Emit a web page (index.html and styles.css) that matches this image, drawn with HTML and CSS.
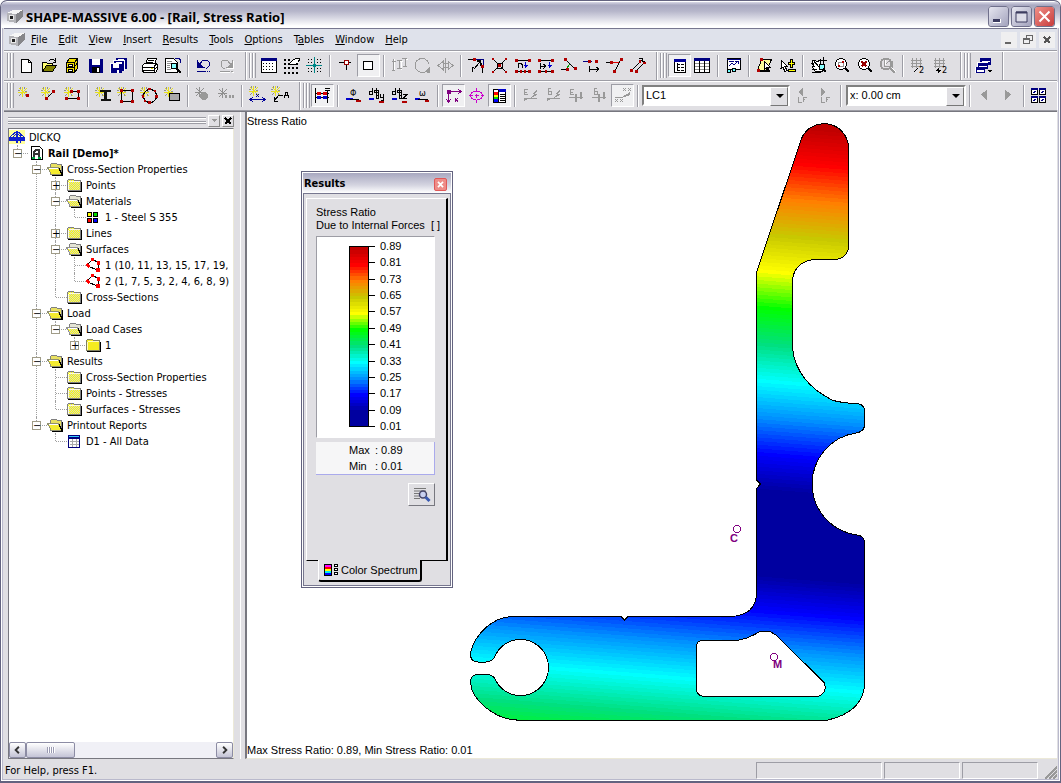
FILE: index.html
```html
<!DOCTYPE html>
<html lang="en">
<head>
<meta charset="utf-8">
<title>SHAPE-MASSIVE 6.00 - [Rail, Stress Ratio]</title>
<link rel="stylesheet" href="styles.css">
</head>
<body>
<svg class="defs" aria-hidden="true">
  <pattern id="hatch" width="2" height="2" patternUnits="userSpaceOnUse"><path d="M0 0h2v2H0z" fill="#d4d4c8"/><path d="M0 0h1v1H0zM1 1h1v1H1z" fill="#ffff00"/></pattern>
  <symbol id="spark" viewBox="0 0 10 10"><path class="ye" d="M4.500 0v10M0 5.500h9M1 1l8 8M9 1l-8 8"/><path class="gr" d="M2 0l1 2M7 0l-1 2M0 3h2M7 4h2M1 9l2-2M7 7l1 2"/></symbol>
  <symbol id="sparkg" viewBox="0 0 10 10"><path class="gr" d="M4.500 0v10M0 5.500h9M1 1l8 8M9 1l-8 8"/></symbol>
  <symbol id="closed" viewBox="0 0 18 16"><path d="M1.500 13.500v-10l1.500-1.500h4l1.500 1.500h6v10z" fill="url(#hatch)" stroke="#808080"/><path d="M2 14.500h13.500v-10" fill="none" stroke="#000"/><path d="M3 4.500h11M2.500 5v8" stroke="#fffbe0"/></symbol>
  <symbol id="closedy" viewBox="0 0 18 16"><path d="M1.500 13.500v-10l1.500-1.500h4l1.500 1.500h6v10z" fill="#f4ec20" stroke="#808060"/><path d="M2 14.500h13.500v-10" fill="none" stroke="#000"/><path d="M3 4.500h11M2.500 5v8" stroke="#fffbc0"/></symbol>
  <symbol id="open" viewBox="0 0 18 16"><path d="M3.500 13.500v-10l1.500-1.500h4l1.500 1.500h4v10z" fill="#e8e060" stroke="#808080"/><path d="M.5 6.500h11l3 7h-10z" fill="#f4ec30" stroke="#909070"/><path d="M5 14.500h10.500v-10" fill="none" stroke="#000"/><path d="M15 13.500l-3-6" stroke="#000"/><path d="M2 7.500h9" stroke="#fff"/></symbol>
  <symbol id="openg" viewBox="0 0 18 16"><path d="M3.500 13.500v-10l1.500-1.500h4l1.500 1.500h4v10z" fill="#e4e4d4" stroke="#808080"/><path d="M.5 6.500h11l3 7h-10z" fill="url(#hatch)" stroke="#909090"/><path d="M5 14.500h10.500v-10" fill="none" stroke="#000"/><path d="M15 13.500l-3-6" stroke="#000"/><path d="M2 7.500h9" stroke="#fff"/></symbol>
  <symbol id="poly" viewBox="0 0 18 16"><path d="M1.500 8.500l6-6 6 3v8z" fill="#fff" stroke="#000"/><path d="M0 8l3-2 2 3-2 2zM6 1h3v3H6zM12 4h3v4h-3zM11 11h4v4h-4z" fill="#f00"/></symbol>
  <symbol id="app" viewBox="0 0 16 16"><path d="M0 4l6-3h10l-7 4z" fill="#f6f6f6"/><path d="M9 5l7-4v7l-7 6z" fill="#86868a"/><path d="M0 4l9 1v9l-9-2z" fill="#b4b4b8"/><path d="M2 6h5v5H2z" fill="#e8e8e8"/><path d="M3 7h3v3H3z" fill="#222"/></symbol>
</svg>
<div class="window">
  <header class="titlebar">
    <svg class="i16"><use href="#app"/></svg>
    <h1>SHAPE-MASSIVE 6.00 - [Rail, Stress Ratio]</h1>
    <div class="winbtns">
      <button aria-label="Minimize"><svg viewBox="0 0 19 19"><path d="M4 12h8v4H4z" fill="#fff"/><path d="M4 12h7v3H4z" fill="#3c3c60"/></svg></button>
      <button aria-label="Maximize"><svg viewBox="0 0 19 19"><path d="M4 5h11v10H4z" fill="#dcdce8" stroke="#3c3c60"/><path d="M4 5.500h11" stroke="#3c3c60" stroke-width="2"/></svg></button>
      <button class="red" aria-label="Close"><svg viewBox="0 0 19 19"><path d="M4.500 4.500l10 10M14.500 4.500l-10 10" stroke="#fff" stroke-width="2"/></svg></button>
    </div>
  </header>
  <nav class="menubar">
    <svg class="i16"><use href="#app"/></svg>
    <button><u>F</u>ile</button><button><u>E</u>dit</button><button><u>V</u>iew</button><button><u>I</u>nsert</button><button><u>R</u>esults</button><button><u>T</u>ools</button><button><u>O</u>ptions</button><button>T<u>a</u>bles</button><button><u>W</u>indow</button><button><u>H</u>elp</button>
    <div class="mdibtns">
      <button aria-label="Minimize document"><svg viewBox="0 0 16 16"><path d="M4 10h6v2H4z" fill="#666"/></svg></button>
      <button aria-label="Restore document"><svg viewBox="0 0 16 16"><path d="M3.500 6.500h6v5h-6zM6 6V3.500h6.500v5H10M4 7.500h5" fill="none" stroke="#666"/></svg></button>
      <button aria-label="Close document"><svg viewBox="0 0 16 16"><path d="M5 5l6 6M11 5l-6 6" stroke="#555" stroke-width="2"/></svg></button>
    </div>
  </nav>

  <div class="toolrow">
    <div class="band">
      <i class="grip"></i>
      <button aria-label="New"><svg viewBox="0 0 21 21"><path d="M5.500 4.500h7l3 3v10h-10z" fill="#fff" stroke="#000"/><path class="k" d="M12.500 4.500v3h3"/></svg></button>
      <button aria-label="Open"><svg viewBox="0 0 21 21"><path d="M3.500 16.500v-9h4l1 1h5v3" fill="#ffff70" stroke="#000"/><path d="M3.500 16.500l4-6h10l-4 6z" fill="#808000" stroke="#000"/><path class="k" d="M10 6l2-2h2l2 2M16.500 3v4h-3"/></svg></button>
      <button aria-label="Project manager"><svg viewBox="0 0 21 21"><path d="M4.500 7.500l3-4h8v10l-3 4h-8z" fill="#f0e000" stroke="#000"/><path class="k" d="M4.500 7.500h8v10M12.500 7.500l3-4M4 12.500h8l3-4"/><path d="M6 9h4v2H6zM6 14h4v2H6z" fill="#fff" stroke="#000"/></svg></button>
      <button aria-label="Save"><svg viewBox="0 0 21 21"><path d="M4 4h14v14H5l-1-1z" fill="#000080"/><path d="M7 4h8v6H7z" fill="#fff"/><path d="M7 12h8v6H7z" fill="#000"/><path d="M12 13h2v4h-2z" fill="#fff"/></svg></button>
      <button aria-label="Save all"><svg viewBox="0 0 21 21"><path d="M8 3h11v11H8z" fill="#000080"/><path d="M10 4h6v2h-6z" fill="#fff"/><path d="M5 5h12v11H5z" fill="#fff"/><path d="M6 6h10v10H6z" fill="#000080"/><path d="M8 7h6v1H8z" fill="#fff"/><path d="M2 8h12v10H2z" fill="#fff"/><path d="M3 9h11v9H3z" fill="#000080"/><path d="M5 9h6v4H5zM9 15h2v3H9z" fill="#fff"/></svg></button>
      <i class="sep"></i>
      <button aria-label="Print"><svg viewBox="0 0 21 21"><path d="M6.500 9.500l2-6h9l-2 6M3.500 10.500l2-2h12l1 1v5l-2 3h-11l-2-1z" fill="#fff" stroke="#000"/><path class="k" d="M9 5.500h6M8 7.500h6M4 12.500h11M15 17v-6l3-2M4 15.500h11M16 14l3-3"/><path d="M12 13h2v1h-2z" fill="#dd0"/></svg></button>
      <button aria-label="Print preview"><svg viewBox="0 0 21 21"><path d="M3.500 3.500h8l4 4v10h-12z" fill="#fff" stroke="#000"/><path class="gr" d="M5 6.500h5M5 8.500h4M5 10.500h3M5 12.500h3M5 14.500h4"/><circle cx="12" cy="11" r="3" fill="#8ff" stroke="#000"/><path d="M14 13l5 5" stroke="#000" stroke-width="2"/><path class="n" d="M13 3.500h4l1 1v3"/></svg></button>
      <i class="sep"></i>
      <button aria-label="Undo"><svg viewBox="0 0 21 21"><path class="n" d="M4.500 5v7h7M5 11l5-6h4l2 2v4l-2 2h-1M4 16.500h9M14 16.500h1M16 16.500h1"/><path d="M5 7l5 5H5z" fill="#000080"/></svg></button>
      <button aria-label="Redo" disabled><svg viewBox="0 0 21 21"><path class="w" d="M17.500 6v7h-7M4 17.500h10M16 17.500h2"/><path class="g" d="M16.500 5v7h-7M16 11l-5-6H7L5 7v4l2 2h2M4 16.500h10M15 16.500h2"/><path d="M16 7l-5 5h5z" fill="#999"/></svg></button>
    </div>
    <div class="band">
      <i class="grip"></i>
      <button aria-label="Work window"><svg viewBox="0 0 21 21"><path d="M3.500 3.500h15v14h-15z" fill="#fff" stroke="#000"/><path d="M3 3h16v3H3z" fill="#000080"/><path class="dot" d="M5 8.500h12M5 11.500h12M5 14.500h12"/></svg></button>
      <button aria-label="Snap"><svg viewBox="0 0 21 21"><path class="dots" d="M3 4.500h6M3 8.500h15M3 12.500h15M3 17.500h15"/><path d="M8.500 8.500l3-3 3-2h4l-1 4-3 2h-5z" fill="#fff" stroke="#000"/></svg></button>
      <button aria-label="Grid"><svg viewBox="0 0 21 21"><path class="dot" d="M4 4.500h14M4 7.500h14M4 13.500h14M4 16.500h14"/><path d="M10.500 2v16M2 10.500h16M9.500 9.500h2v2h-2z" fill="none" stroke="#088"/></svg></button>
      <i class="sep"></i>
      <button aria-label="Node mode"><svg viewBox="0 0 21 21"><path class="k" d="M4 7.500h12M11.500 7v8"/><path d="M9.500 5.500h4v4h-4z" fill="#fff" stroke="#900"/></svg></button>
      <button class="on" aria-label="Rectangle mode"><svg viewBox="0 0 21 21"><path d="M5.500 6.500h9v8h-9z" fill="#fff" stroke="#000"/></svg></button>
      <i class="sep"></i>
      <button aria-label="Move" disabled><svg viewBox="0 0 21 21"><path class="w" d="M5.500 4v12M10 6h4M12 6v9M16 4h3"/><path class="g" d="M4.500 4v12M3 6.500h4M3 15.500h3M8 5.500h5M10.500 5v9M8 13.500h5M13 3.500h5M16.500 3v9M14 11.500h4"/></svg></button>
      <button aria-label="Rotate" disabled><svg viewBox="0 0 21 21"><path class="g" d="M15 15.500A7 7 0 1 1 17 9"/><path d="M12 17l6-6v7z" fill="#999"/></svg></button>
      <button aria-label="Mirror" disabled><svg viewBox="0 0 21 21"><path class="g" d="M3 10.500l5-4v8zM18 10.500l-5-4v8zM10.500 3v15M8 8.500h5M8 12.500h5"/></svg></button>
      <i class="sep"></i>
      <button aria-label="Fillet"><svg viewBox="0 0 21 21"><path class="k" d="M2 4.500h6l6 1 2 6v6M8 14l6-7M14.500 11V6h-4M6 17v-5h2"/><path class="n" d="M9 4.500h8v6"/><path class="r" d="M7 3h3v3H7zM15 10h3v3h-3z"/></svg></button>
      <button aria-label="Intersect"><svg viewBox="0 0 21 21"><path class="k" d="M4 4l13 13M17 4L4 17M8 8h5v5H8z"/><path class="r" d="M3 3h2v2H3zM16 3h2v2h-2zM3 16h2v2H3zM16 16h2v2h-2zM9 9h3v3H9z"/></svg></button>
      <button aria-label="Divide by number"><svg viewBox="0 0 21 21"><path class="k" d="M4 5.500h13M4 16.500h13M6.500 8v5M7 8.500h2l1 1V13"/><path d="M13.500 7v6M11.500 10.500h4M12.500 11.500h2" stroke="#00c"/><path class="r" d="M3 4h3v3H3zM16 4h3v3h-3zM3 15h3v3H3zM8 15h2v3H8zM12 15h2v3h-2zM16 15h3v3h-3z"/></svg></button>
      <button aria-label="Divide by length"><svg viewBox="0 0 21 21"><path class="k" d="M4 5.500h13M4 16.500h13M5.500 8v6M6 11.500h5M8.500 9l2 2-2 3"/><path d="M14.500 7v6M12.500 10.500h4M13.500 11.500h2" stroke="#00c"/><path class="r" d="M3 4h3v3H3zM16 4h3v3h-3zM3 15h3v3H3zM10 15h2v3h-2zM16 15h3v3h-3z"/></svg></button>
      <button aria-label="Connect"><svg viewBox="0 0 21 21"><path class="k" d="M7 4l10 10M3 14.500h6"/><path d="M8 14l4-5" stroke="#090"/><path class="r" d="M6 3h3v3H6zM16 12h3v3h-3zM8 13h3v3H8z"/></svg></button>
      <button aria-label="Extend"><svg viewBox="0 0 21 21"><path class="n" d="M2 6.500h9"/><path class="k" d="M8.500 11v6M9 14.500h9M15 12l3 2-3 3"/><path class="r" d="M7 5h3v3H7zM14 5h3v3h-3z"/></svg></button>
      <button aria-label="Trim"><svg viewBox="0 0 21 21"><path class="k" d="M2 7.500h7M17 4l-6 12"/><path d="M9 7.500h6" stroke="#d00"/><path class="r" d="M6 6h3v3H6zM16 3h3v3h-3zM9 15h3v3H9z"/></svg></button>
      <button aria-label="Parallel"><svg viewBox="0 0 21 21"><path class="k" d="M4 16l9-9M9 16l9-9M12 3h3v4M13 5l5 2"/><path class="r" d="M3 14h3v3H3zM8 15h3v3H8zM12 5h2v3h-2zM16 7h3v2h-3z"/></svg></button>
    </div>
    <div class="band">
      <i class="grip"></i>
      <button class="on" aria-label="Navigator"><svg viewBox="0 0 21 21"><path d="M5.500 4.500h11v13h-11z" fill="#fff" stroke="#000"/><path d="M5 4h12v3H5z" fill="#009"/><path class="k" d="M8.500 8v8M8 9.500h3M9 12.500h2M9 15.500h2M12 9.500h3M12 12.500h3M12 15.500h3"/></svg></button>
      <button aria-label="Tables"><svg viewBox="0 0 21 21"><path d="M2.500 3.500h15v14h-15z" fill="#fff" stroke="#000"/><path d="M2 3h16v3H2z" fill="#000080"/><path class="gr" d="M3 8.500h14M3 11.500h14M3 14.500h14"/><path class="k" d="M7.500 6v11M12.500 6v11"/></svg></button>
      <i class="sep"></i>
      <button aria-label="Result diagrams"><svg viewBox="0 0 21 21"><path d="M4.500 3.500h13v11h-13z" fill="#fff" stroke="#000"/><path class="n" d="M4 4h14M6 11l3-3 2 2 4-4M12 6h3v3M6 6h5"/><path d="M4 14h3v3H4zM9 13h3v3H9z" fill="#6ff" stroke="#000"/></svg></button>
      <i class="sep"></i>
      <button aria-label="Select special"><svg viewBox="0 0 21 21"><path d="M7.500 4.500h10l-5 11h-9z" fill="#ff9" stroke="#000"/><path class="k" d="M3 16.500h13"/><path d="M10.500 6.500v8l2-2 2 4 1-1-2-3h3z" fill="#fff" stroke="#000"/><path class="r" d="M6 3h3v3H6zM3 14h3v3H3z"/></svg></button>
      <button aria-label="Add to selection"><svg viewBox="0 0 21 21"><path d="M4.500 5.500l6 6H8l2 4-2 1-2-4-2 1z" fill="#fff" stroke="#000"/><path d="M11.500 7.500h2v-3h2v3h2v2h-2v3h-2v-3h-2zM11.500 14.500h7v2h-7z" fill="#ff0" stroke="#000"/></svg></button>
      <i class="sep"></i>
      <button aria-label="Pan"><svg viewBox="0 0 21 21"><path d="M4 6l3-1 2 2 3-2v4l2 2v5H7l-3-4 2-1z" fill="#fff" stroke="#000"/><path class="k" d="M3 8l4 4M5 5l6 7M4 14h5M15.500 2v8M12 5.500h7M4 17h9"/><circle cx="14" cy="12" r="3" fill="#8ff" stroke="#000"/><path d="M15 14l3 3" stroke="#000" stroke-width="2"/></svg></button>
      <button aria-label="Zoom window"><svg viewBox="0 0 21 21"><circle cx="10" cy="9" r="5.500" fill="#fff" stroke="#000"/><path d="M14 13l4 4" stroke="#000" stroke-width="2"/><path class="gr" d="M7.500 7.500h5v4h-5z"/><path class="r" d="M11 6h2v2h-2zM7 10h2v2H7z"/></svg></button>
      <button aria-label="Zoom all"><svg viewBox="0 0 21 21"><circle cx="10" cy="9" r="5.500" fill="#fff" stroke="#000"/><path d="M14 13l4 4" stroke="#000" stroke-width="2"/><path d="M7.500 6.500l5 5M12.500 6.500l-5 5" stroke="#900" stroke-width="2"/></svg></button>
      <button aria-label="Previous view" disabled><svg viewBox="0 0 21 21"><circle cx="9" cy="9" r="5.500" fill="none" stroke="#999" stroke-width="2"/><path d="M13 13l5 5" stroke="#999" stroke-width="2"/><path class="g" d="M7.500 5v6h6M8 10l4-4h3v7"/><path class="w" d="M8.500 5v5M15 13l4 4"/></svg></button>
      <i class="sep"></i>
      <button aria-label="Halve grid"><svg viewBox="0 0 21 21"><path class="g" d="M4.500 3v10M8.500 3v10M12.500 3v10M3 5.500h11M3 8.500h11M3 11.500h11"/><path class="k" d="M6 17l4-4"/><text class="tiny" x="11" y="18">2</text></svg></button>
      <button aria-label="Double grid"><svg viewBox="0 0 21 21"><path class="g" d="M4.500 3v10M8.500 3v10M12.500 3v10M3 5.500h11M3 8.500h11M3 11.500h11"/><path class="k" d="M5 15.500h5M7.500 13v5M6 14l3 3"/><text class="tiny" x="11" y="18">2</text></svg></button>
    </div>
    <div class="band">
      <i class="grip"></i>
      <button aria-label="Windows"><svg viewBox="0 0 21 21"><path d="M7 3h11v7H7z" fill="#000080"/><path d="M9 6h8v1H9z" fill="#fff"/><path d="M4 7h11v6H4z" fill="#fff"/><path d="M5 8h10v6H5z" fill="#000080"/><path d="M6 11h8v1H6z" fill="#fff"/><path d="M2 12h10v6H2z" fill="#fff"/><path d="M3 12h9v6H3z" fill="#000080"/><path d="M4 15h7v2H4z" fill="#fff"/><path d="M14 15h5l-2 3z"/></svg></button>
    </div>
  </div>

  <div class="toolrow second">
    <div class="band">
      <i class="grip"></i>
      <button aria-label="New point"><svg viewBox="0 0 21 21"><use href="#spark" width="10" height="10" x="2" y="2"/><path class="r" d="M10 9h3v3h-3z"/></svg></button>
      <button aria-label="New line"><svg viewBox="0 0 21 21"><use href="#spark" width="10" height="10" x="2" y="2"/><path class="k" d="M7 14l8-8"/><path class="r" d="M6 12h3v3H6zM13 5h3v3h-3z"/></svg></button>
      <button aria-label="New polyline"><svg viewBox="0 0 21 21"><use href="#spark" width="10" height="10" x="2" y="2"/><path class="k" d="M9 6.500h7v7H4"/><path class="r" d="M8 5h3v3H8zM15 5h3v3h-3zM15 12h3v3h-3zM3 12h3v3H3z"/></svg></button>
      <i class="sep"></i>
      <button aria-label="New section"><svg viewBox="0 0 21 21"><use href="#spark" width="10" height="10" x="2" y="2"/><path d="M7 5h11v2h-4v7h4v2H8v-2h3V7H7z" fill="#111"/></svg></button>
      <button aria-label="New rectangle"><svg viewBox="0 0 21 21"><use href="#spark" width="10" height="10" x="1" y="2"/><path class="k" d="M5.500 5.500h11v11h-11z"/><path class="r" d="M4 4h3v3H4zM15 4h3v3h-3zM4 15h3v3H4zM15 15h3v3h-3z"/></svg></button>
      <button aria-label="New circle"><svg viewBox="0 0 21 21"><use href="#spark" width="10" height="10" x="1" y="2"/><circle class="k" cx="11" cy="11" r="6.500"/><path class="r" d="M9 3h3v2H9zM3 10h2v3H3zM16 10h3v3h-3zM9 16h3v3H9zM15 5h2v2h-2zM5 15h2v2H5z"/></svg></button>
      <button aria-label="New surface"><svg viewBox="0 0 21 21"><use href="#spark" width="10" height="10" x="2" y="2"/><path d="M7.500 8.500h10v7h-10z" fill="#aaa" stroke="#000"/></svg></button>
      <i class="sep"></i>
      <button aria-label="New load" disabled><svg viewBox="0 0 21 21"><use href="#sparkg" width="10" height="10" x="2" y="2"/><circle cx="11" cy="11" r="4" fill="#999"/></svg></button>
      <button aria-label="New case" disabled><svg viewBox="0 0 21 21"><use href="#sparkg" width="10" height="10" x="2" y="3"/><path d="M9 10h2v3H9zM13 10h2v3h-2zM16 10h2v3h-2z" fill="#999"/></svg></button>
      <i class="sep"></i>
      <button aria-label="Dimension"><svg viewBox="0 0 21 21"><use href="#spark" width="10" height="10" x="2" y="1"/><path d="M4 14.500h13M6 12l-3 2.500L6 17M15 12l3 2.500-3 2.500M9 9l3 3M12 9l-3 3" fill="none" stroke="#009"/></svg></button>
      <button aria-label="Comment"><svg viewBox="0 0 21 21"><use href="#spark" width="10" height="10" x="1" y="1"/><path class="k" d="M4 16l5-6h4M4 12v4h4M14 13l2-6h1l2 6M15 10.500h3"/></svg></button>
    </div>
    <div class="band last">
      <i class="grip"></i>
      <button class="on" aria-label="Numbering"><svg viewBox="0 0 21 21"><path class="k" d="M3.500 3v15M15.500 6v12M13 3.500h5M13 5.500h5"/><path d="M3 8.500h14M3 12.500h14" stroke="#000"/><path d="M5 7h4v3H5zM11 7h4v3h-4z" fill="#d00"/><path d="M5 11h4v3H5zM11 11h4v3h-4z" fill="#00c"/></svg></button>
      <i class="sep"></i>
      <button aria-label="Phi"><svg viewBox="0 0 21 21"><text class="tiny" x="7" y="11">Φ</text><path d="M3 13.500h7" stroke="#00c" stroke-width="2"/><path class="k" d="M7 14.500h9"/><path class="r" d="M13 15h5v2h-5z"/></svg></button>
      <button aria-label="dPhi dy"><svg viewBox="0 0 21 21"><path class="k" d="M6.500 3v6h-3v-3h3M10.500 3v7M8.500 5.500h4v2h-4zM12.500 7v6h-2v-3h2M14.500 9v3h3M17.500 9v6h-3"/><path d="M3 13.500h5" stroke="#00c" stroke-width="2"/><path class="r" d="M13 16h5v2h-5z"/></svg></button>
      <button aria-label="dPhi dz"><svg viewBox="0 0 21 21"><path class="k" d="M6.500 3v6h-3v-3h3M10.500 3v7M8.500 5.500h4v2h-4zM12.500 7v6h-2v-3h2M14 9.500h4l-4 4h4"/><path d="M3 13.500h5" stroke="#00c" stroke-width="2"/><path class="r" d="M13 16h5v2h-5z"/></svg></button>
      <button aria-label="Omega"><svg viewBox="0 0 21 21"><text class="tiny" x="7" y="11">ω</text><path d="M3 13.500h5" stroke="#00c" stroke-width="2"/><path class="k" d="M6 14.500h10"/><path class="r" d="M13 15h4v2h-4z"/></svg></button>
      <i class="sep"></i>
      <button class="on" aria-label="Principal axes"><svg viewBox="0 0 21 21"><path class="p" d="M5.500 5v12M5 6.500h13M15 4l3 2.500-3 2.500M3 14l2.500 3L8 14M12 13l3 4M15 13l-3 4"/><path d="M4 5h4v4H4z" fill="#800080"/></svg></button>
      <button aria-label="Ellipse"><svg viewBox="0 0 21 21"><ellipse cx="10.500" cy="10.500" rx="6" ry="4.500" fill="none" stroke="#c0c"/><path d="M10.500 3v15M3 10.500h15" stroke="#c0c" stroke-dasharray="4 2"/></svg></button>
      <button class="on" aria-label="Color panel"><svg viewBox="0 0 21 21"><path d="M4.500 4.500h12v13h-12z" fill="#fff" stroke="#000"/><path d="M9 4h8v3H9z" fill="#00c"/><path d="M5 7h4v3H5z" fill="#f00"/><path d="M5 10h4v2H5z" fill="#ff0"/><path d="M5 12h4v2H5z" fill="#0d0"/><path d="M5 14h4v3H5z" fill="#00f"/><path class="k" d="M9.500 5v13M11 9.500h5M11 11.500h5M11 13.500h5M11 15.500h5"/></svg></button>
      <i class="sep"></i>
      <button aria-label="Normal force" disabled><svg viewBox="0 0 21 21"><path class="g" d="M8 4.500H4v5h4M4 7.500h3M4 13.500h13"/><path d="M4 13h7l6-7v4l-6 3-7 3zM12 9h5V5z" fill="#999"/></svg></button>
      <button aria-label="Sigma" disabled><svg viewBox="0 0 21 21"><path class="g" d="M8 3.500H5v6h3v-3H5M4 13.500h13"/><path d="M4 13h7l6-7v4l-6 3-7 3zM12 9h5V5z" fill="#999"/></svg></button>
      <button aria-label="Epsilon" disabled><svg viewBox="0 0 21 21"><path class="g" d="M8 4.500H4v5h4M4 7.500h3M3 12.500h14"/><path d="M9 9h2v8H9zM14 7h2v7h-2z" fill="#999"/></svg></button>
      <button aria-label="Tau" disabled><svg viewBox="0 0 21 21"><path class="g" d="M8 3.500H5v6h3v-3H5M3 12.500h14"/><path d="M9 9h2v8H9zM14 7h2v7h-2z" fill="#999"/></svg></button>
      <button class="on" aria-label="Values" disabled><svg viewBox="0 0 21 21"><path class="g" d="M11 3l3 3M14 3l-3 3M16 3l3 3M19 3l-3 3M3 14l3 3M6 14l-3 3M8 14l3 3M11 14l-3 3"/><path d="M3 12h7l8-5v3l-8 3H3z" fill="#999"/></svg></button>
      <i class="sep"></i>
      <span class="combo lc"><select aria-label="Load case"><option>LC1</option></select></span>
      <button aria-label="Previous load" disabled><svg viewBox="0 0 21 21"><path d="M7 7l5-4v8z" fill="#999"/><path class="g" d="M7.500 12v5h3M12.500 17v-5h3M12 14.500h2"/></svg></button>
      <button aria-label="Next load" disabled><svg viewBox="0 0 21 21"><path d="M12 7L7 3v8z" fill="#999"/><path class="g" d="M7.500 12v5h3M12.500 17v-5h3M12 14.500h2"/></svg></button>
      <i class="sep wide"></i>
      <span class="combo pos"><select aria-label="Location"><option>x: 0.00 cm</option></select></span>
      <i class="sep"></i>
      <button aria-label="Previous location" disabled><svg viewBox="0 0 21 21"><path d="M6 9.500l6-5v11z" fill="#999"/></svg></button>
      <button aria-label="Next location" disabled><svg viewBox="0 0 21 21"><path d="M13 9.500l-6-5v11z" fill="#999"/></svg></button>
      <i class="sep"></i>
      <button aria-label="Tile"><svg viewBox="0 0 21 21"><path d="M2.500 3.500h6v6h-6zM10.500 3.500h6v6h-6zM2.500 11.500h6v6h-6zM10.500 11.500h6v6h-6z" fill="#fff" stroke="#000"/><path d="M2 4h7M10 4h7M2 12h7M10 12h7" stroke="#000080" stroke-width="2"/><path class="n" d="M4 8l3-2M12 8l3-2M4 16l3-2M12 16l3-2"/></svg></button>
    </div>
  </div>

  <main class="work">
    <aside class="navigator">
      <div class="dockbar">
        <i class="docklines"></i>
        <button aria-label="Roll up"><svg viewBox="0 0 10 10"><path d="M2 3h6L5 6z" fill="#999"/></svg></button>
        <button aria-label="Close navigator"><svg viewBox="0 0 10 10"><path d="M2 2l6 6M8 2L2 8" stroke="#000" stroke-width="2"/></svg></button>
      </div>
      <div class="treebox">
        <div class="row"><svg class="ti"><path d="M0 1h16v14H0z" fill="#ffff9c"/><path d="M0 8h16v4H0z" fill="#1020d0"/><path d="M7 2h2v12H7zM11 4h1v10h-1z" fill="#1020d0"/><path d="M1 8l7-6 7 6M4 8l4-4 4 4" fill="none" stroke="#1020d0"/></svg><span>DICKQ</span></div>
        <ul class="tree">
          <li><div class="row"><button class="exp" aria-label="Collapse">−</button><svg class="ti"><path d="M3.500 1.500h8l3 3v10h-11z" fill="#fff" stroke="#000"/><path d="M6 13V7l2-2h3v8M6 9h5" stroke="#333" stroke-width="2" fill="none"/><path d="M4 12h3v2H4zM10 12h3v2h-3z" fill="#0a4"/></svg><b>Rail [Demo]*</b></div>
            <ul>
              <li><div class="row"><button class="exp" aria-label="Collapse">−</button><svg class="ti"><use href="#open"/></svg><span>Cross-Section Properties</span></div>
                <ul>
                  <li><div class="row"><button class="exp" aria-label="Expand">+</button><svg class="ti"><use href="#closed"/></svg><span>Points</span></div></li>
                  <li><div class="row"><button class="exp" aria-label="Collapse">−</button><svg class="ti"><use href="#openg"/></svg><span>Materials</span></div>
                    <ul><li><div class="row leaf"><svg class="ti"><path d="M2.500 3.500h4v4h-4z" fill="#ff0" stroke="#000"/><path d="M8.500 3.500h4v4h-4z" fill="#0d0" stroke="#000"/><path d="M2.500 9.500h4v4h-4z" fill="#f00" stroke="#000"/><path d="M8.500 9.500h4v4h-4z" fill="#00f" stroke="#000"/></svg><span>1 - Steel S 355</span></div></li></ul></li>
                  <li><div class="row"><button class="exp" aria-label="Expand">+</button><svg class="ti"><use href="#closed"/></svg><span>Lines</span></div></li>
                  <li><div class="row"><button class="exp" aria-label="Collapse">−</button><svg class="ti"><use href="#openg"/></svg><span>Surfaces</span></div>
                    <ul><li><div class="row leaf"><svg class="ti"><use href="#poly"/></svg><span>1 (10, 11, 13, 15, 17, 19,</span></div></li>
                    <li><div class="row leaf"><svg class="ti"><use href="#poly"/></svg><span>2 (1, 7, 5, 3, 2, 4, 6, 8, 9)</span></div></li></ul></li>
                  <li><div class="row leaf"><svg class="ti"><use href="#closed"/></svg><span>Cross-Sections</span></div></li>
                </ul></li>
              <li><div class="row"><button class="exp" aria-label="Collapse">−</button><svg class="ti"><use href="#open"/></svg><span>Load</span></div>
                <ul><li><div class="row"><button class="exp" aria-label="Collapse">−</button><svg class="ti"><use href="#openg"/></svg><span>Load Cases</span></div>
                  <ul><li><div class="row"><button class="exp" aria-label="Expand">+</button><svg class="ti"><use href="#closedy"/></svg><span>1</span></div></li></ul></li></ul></li>
              <li><div class="row"><button class="exp" aria-label="Collapse">−</button><svg class="ti"><use href="#open"/></svg><span>Results</span></div>
                <ul>
                  <li><div class="row leaf"><svg class="ti"><use href="#closed"/></svg><span>Cross-Section Properties</span></div></li>
                  <li><div class="row leaf"><svg class="ti"><use href="#closed"/></svg><span>Points - Stresses</span></div></li>
                  <li><div class="row leaf"><svg class="ti"><use href="#closed"/></svg><span>Surfaces - Stresses</span></div></li>
                </ul></li>
              <li><div class="row"><button class="exp" aria-label="Collapse">−</button><svg class="ti"><use href="#open"/></svg><span>Printout Reports</span></div>
                <ul><li><div class="row leaf"><svg class="ti"><path d="M2.500 2.500h11v12h-11z" fill="#fff" stroke="#00007c"/><path d="M3 3.500h10" stroke="#3cf"/><path d="M3 5h10" stroke="#00007c" stroke-width="2"/><path d="M4 8.500h9M4 11.500h9M6.500 6v8M10.500 6v8" stroke="#aaa"/></svg><span>D1 - All Data</span></div></li></ul></li>
            </ul></li>
        </ul>
        <div class="hscroll">
          <button aria-label="Scroll left"><svg viewBox="0 0 15 15"><path d="M9 4L5.500 7.500 9 11" fill="none" stroke="#333" stroke-width="2"/></svg></button>
          <i class="thumb"></i><i class="track"></i>
          <button aria-label="Scroll right"><svg viewBox="0 0 15 15"><path d="M6 4l3.500 3.500L6 11" fill="none" stroke="#333" stroke-width="2"/></svg></button>
        </div>
      </div>
    </aside>
    <section class="canvas">
      <svg class="plot" role="img" aria-label="Stress ratio plot">
        <defs><linearGradient id="stress" gradientUnits="userSpaceOnUse" x1="800" y1="126" x2="751" y2="755"></linearGradient></defs>
        <g transform="translate(-247 -112)">
          <path class="part" fill="url(#stress)" fill-rule="evenodd" d="M801.500 138.500A24.500 24.500 0 0 1 848.500 147V246.500Q848 257 836.500 259.500H815Q796 261 792.500 278.500V348Q796 382 833 400.500Q843 403 853 403.500Q864 403 864.500 410V426.500Q863 432 856 433A51.500 51.500 0 0 0 857 535Q864 536 864.500 542V686Q862 712 828 720H516.500C494 719 472 700 470.500 683Q470 675 478 674.500H488Q494 675 496 681A28 28 0 1 0 496 654Q493 662 486 662H478Q470 662 470.500 653C475 634 492 617 513 616.500H621L624.500 620L628 616.500H731.500Q756 615 756.500 593V488.500L760.500 484L756.500 480V272.500ZM703 640.500H735Q746 640 760 631.500H770L776.500 635.500L824 682.500Q828 692 818.500 696.500H703Q697 695 696.500 690V645Q698 640 703 640.500Z"/>
          <circle class="p" cx="737" cy="529" r="3.500"/><text class="mark" x="730" y="542">C</text>
          <circle class="p" cx="774" cy="657" r="3.500"/><text class="mark" x="773" y="668">M</text>
        </g>
      </svg>
      <p class="caption">Stress Ratio</p>
      <p class="summary">Max Stress Ratio: 0.89, Min Stress Ratio: 0.01</p>

      <div class="dialog" role="dialog" aria-label="Results">
        <div class="dlgtitle"><b>Results</b><button aria-label="Close results"><svg viewBox="0 0 13 13"><path d="M3.500 3.500l6 6M9.500 3.500l-6 6" stroke="#fff" stroke-width="2"/></svg></button></div>
        <div class="dlgbody">
          <div class="page">
            <p>Stress Ratio<br>Due to Internal Forces&nbsp; [ ]</p>
            <div class="legend">
              <div class="bar" id="bar"></div>
              <ul><li>0.89</li><li>0.81</li><li>0.73</li><li>0.65</li><li>0.57</li><li>0.49</li><li>0.41</li><li>0.33</li><li>0.25</li><li>0.17</li><li>0.09</li><li>0.01</li></ul>
            </div>
            <dl><dt>Max</dt><dd>: 0.89</dd><dt>Min</dt><dd>: 0.01</dd></dl>
            <button class="detail" aria-label="Details"><svg viewBox="0 0 19 19"><path d="M2 3.500h12M2 6h12M2 8.500h6M2 11h5M2 13.500h6" stroke="#777"/><circle cx="11" cy="9.500" r="3.500" fill="#c8d0f0" stroke="#446" stroke-width="1.500"/><path d="M13.500 12l4 4" stroke="#3858b0" stroke-width="3"/></svg></button>
          </div>
          <button class="tab"><svg viewBox="0 0 16 14"><path d="M1 1h8v12H1z" fill="#000"/><path d="M2 2h6v2H2z" fill="#f0f"/><path d="M2 4h6v2H2z" fill="#f00"/><path d="M2 6h6v2H2z" fill="#ff0"/><path d="M2 8h6v2H2z" fill="#0ee"/><path d="M2 10h6v2H2z" fill="#00f"/><path d="M11.500 1.500h3v2h-3zM11.500 5.500h3v2h-3zM11.500 9.500h3v2h-3z" fill="#fff" stroke="#000"/></svg><span>Color Spectrum</span></button>
        </div>
      </div>
    </section>
  </main>

  <footer class="status">
    <span>For Help, press F1.</span>
    <i class="pane wide"></i><i class="pane"></i><i class="pane"></i>
    <svg class="sizer" viewBox="0 0 14 14"><path d="M2 14L14 2M6 14l8-8M10 14l4-4" stroke="#999" stroke-width="2"/></svg>
  </footer>
</div>
<script src="plot.js"></script>
</body>
</html>
```

FILE: styles.css
```css
* { box-sizing: border-box; }
body { margin: 0; font: 11px/14px "DejaVu Sans Condensed", "DejaVu Sans", sans-serif; color: #000; background: #fff; }
button { font: inherit; color: inherit; padding: 0; margin: 0; border: 0; background: none; }
p, ul, dl, dd, h1 { margin: 0; padding: 0; }
ul { list-style: none; }
svg { display: block; flex: none; shape-rendering: crispEdges; }
.defs { position: absolute; width: 0; height: 0; }
.i16 { width: 16px; height: 16px; }

.k { fill: none; stroke: #000; }
.g { fill: none; stroke: #999; }
.w { fill: none; stroke: #fff; }
.n { fill: none; stroke: #000080; }
.p { fill: none; stroke: #800080; }
.r { fill: #b00000; }
.ye { stroke: #e8e020; }
.gr { fill: none; stroke: #909090; }
.dot { stroke: #000; stroke-dasharray: 1 2; }
.dots { stroke: #000; stroke-width: 2; stroke-dasharray: 2 2; }
.tiny { font: 9px "DejaVu Sans Condensed", sans-serif; fill: #000; }

.window { display: flex; flex-direction: column; height: 100vh; background: #e0dfe3; border: 1px solid #63637f; border-width: 1px 1px 2px; border-radius: 7px 7px 0 0; box-shadow: inset 0 0 0 1px #fff, inset 0 0 0 2px #b9b9cc; padding: 1px 3px 2px; overflow: hidden; }
.titlebar { display: flex; align-items: center; flex: none; height: 26px; margin: 0 -3px; padding: 3px 5px 0 6px; gap: 3px; background: linear-gradient(#d8d8e6 0, #a9a9c1 12%, #b6b6ca 35%, #dcdce6 65%, #fff 92%, #fff 100%); }
.titlebar h1 { flex: 1; font: bold 13px/18px "Open Sans", sans-serif; }
.winbtns { display: flex; gap: 2px; }
.winbtns button { width: 21px; height: 21px; border: 1px solid #fff; border-radius: 3px; background: linear-gradient(135deg, #e6e6f0, #a3a3bd); outline: 1px solid #70708c; outline-offset: -1px; }
.winbtns svg { width: 19px; height: 19px; shape-rendering: auto; }
.winbtns .red { background: linear-gradient(135deg, #f09088, #c83c3c); }

.menubar { display: flex; align-items: center; flex: none; height: 23px; padding: 0 2px 0 5px; background: #dfe2eb; border-top: 1px solid #77778f; border-bottom: 1px solid #9d9da5; }
.menubar > svg { margin-right: 1px; }
.menubar > button { height: 18px; padding: 0 6px 0 5px; line-height: 16px; }
.mdibtns { display: flex; gap: 3px; margin-left: auto; }
.mdibtns button { width: 16px; height: 16px; background: #efeff0; }
.mdibtns svg { width: 16px; height: 16px; }

.toolrow { display: flex; flex: none; height: 30px; border-top: 1px solid #fff; border-bottom: 1px solid #9d9da5; }
.band { display: flex; align-items: center; padding: 0 7px 0 3px; border-right: 1px solid #9d9da5; box-shadow: 1px 0 #fff; }
.toolrow > .band { padding-bottom: 1px; }
.band.last { flex: 1; border: 0; padding-right: 0; }
.grip { flex: none; width: 7px; height: 25px; margin-right: 1px; border: solid #9d9da5; border-width: 0 1px; background: linear-gradient(90deg, #fff 1px, #e0dfe3 1px 2px, #9d9da5 2px 3px, #fff 3px 4px, #e0dfe3 4px); }
.band > button { flex: none; width: 23px; height: 23px; border: 1px solid transparent; }
.band > button svg { width: 21px; height: 21px; }
.band > .on { border-color: #9d9da5 #fff #fff #9d9da5; background: #f0f0f2; }
.sep { flex: none; width: 2px; height: 22px; margin: 0 3px; border-left: 1px solid #9d9da5; border-right: 1px solid #fff; }
.sep.wide { margin: 0 4px; }

.combo { position: relative; flex: none; height: 21px; }
.lc { width: 148px; }
.pos { width: 120px; }
.combo select { appearance: none; width: 100%; height: 21px; padding: 0 20px 0 2px; border: 2px solid; border-color: #808080 #fff #fff #808080; border-radius: 0; background: #fff; font: 11px/15px "Liberation Sans", sans-serif; color: #000; }
.combo::after { content: ""; position: absolute; right: 2px; top: 2px; width: 16px; height: 17px; border: 1px solid; border-color: #fff #777 #777 #fff; background: #e0dfe3; pointer-events: none; }
.combo::before { content: ""; position: absolute; z-index: 1; right: 6px; top: 9px; border: 4px solid transparent; border-top-color: #000; border-bottom: 0; pointer-events: none; }

.work { display: flex; flex: 1; min-height: 0; border-top: 1px solid #77777f; }
.navigator { display: flex; flex-direction: column; flex: none; width: 237px; padding: 1px 6px 0 4px; border-right: 1px solid #fff; }
.dockbar { display: flex; align-items: center; gap: 2px; flex: none; height: 15px; }
.docklines { flex: 1; height: 7px; border: solid #9d9da5; border-width: 1px 0; background: linear-gradient(#fff 1px, #e0dfe3 1px 3px, #9d9da5 3px 4px, #fff 4px); }
.dockbar button { width: 12px; height: 12px; border: 1px solid; border-color: #fff #888 #888 #fff; }
.dockbar svg { width: 10px; height: 10px; }
.treebox { display: flex; flex-direction: column; flex: 1; min-height: 0; background: #fff; border: 1px solid #77777f; border-right-color: #ece9d8; }
.tree { flex: 1; overflow: hidden; white-space: nowrap; }
.tree ul { margin-left: 19px; }
.tree li { position: relative; }
.tree li::before { content: ""; position: absolute; left: 8px; top: 0; bottom: 0; border-left: 1px dotted #a0a0a0; }
.tree li:last-child::before { bottom: auto; height: 8px; }
.row { position: relative; display: flex; align-items: center; height: 16px; line-height: 16px; }
.row > span, .row > b { padding-top: 1px; }
.leaf { padding-left: 19px; }
.leaf::before, .exp::after { content: ""; position: absolute; left: 9px; top: 8px; width: 11px; border-top: 1px dotted #a0a0a0; }
.row .exp { position: relative; flex: none; z-index: 1; width: 9px; height: 9px; margin: 0 6px 0 4px; border: 1px solid #a09c88; background: #fff; font: 10px/7px "DejaVu Sans", sans-serif; }
.row .exp::after { left: 9px; top: 3px; width: 5px; }
.ti { width: 18px; height: 16px; margin-right: 2px; }
.hscroll { display: flex; flex: none; height: 16px; background: #f0f0f6; }
.hscroll button, .thumb { width: 17px; height: 16px; border: 1px solid #8c8ca4; border-radius: 2px; background: linear-gradient(#fff, #c4c4d6); }
.hscroll svg { width: 15px; height: 14px; shape-rendering: auto; }
.thumb { width: 49px; background: repeating-linear-gradient(90deg, #9a9ab2 0 1px, #fff 1px 2px) 20px 4px / 8px 6px no-repeat, linear-gradient(#fff, #c4c4d6); }
.track { flex: 1; }

.canvas { position: relative; flex: 1; margin-left: 4px; background: #fff; border-left: 2px solid #77777f; border-bottom: 1px solid #ece9d8; font-family: "Liberation Sans", sans-serif; overflow: hidden; }
.plot { position: absolute; left: 0; top: 0; width: 100%; height: 100%; }
.part { stroke: #000; }
.mark { font: bold 11px "Liberation Sans", sans-serif; fill: #800080; }
.caption, .summary { position: absolute; left: 0; }
.caption { top: 2px; }
.summary { bottom: 1px; }

.dialog { position: absolute; left: 54px; top: 59px; width: 152px; border: 1px solid #63637f; background: #e0dfe3; box-shadow: inset 0 0 0 1px #fff; padding: 1px; }
.dlgtitle { display: flex; align-items: center; justify-content: space-between; height: 20px; padding: 2px 4px 0 1px; font: bold 11px/16px "DejaVu Sans Condensed", sans-serif; background: linear-gradient(#a8a8c0, #d4d4e0 60%, #fff); }
.dlgtitle button { width: 13px; height: 13px; border: 1px solid #e05858; border-radius: 2px; background: #ee8c88; }
.dlgtitle svg { width: 11px; height: 11px; shape-rendering: auto; }
.dlgbody { padding: 4px 2px 3px 2px; border: 1px solid #77778f; }
.page { display: flex; flex-direction: column; height: 363px; padding: 7px 11px 0 9px; border: solid; border-width: 1px 2px 1px 1px; border-color: #fff #000 #000 #fff; }
.page p { line-height: 13px; white-space: nowrap; }
.legend { display: flex; margin-top: 4px; height: 202px; padding: 9px 0 0 32px; background: #fff; border: 1px solid #9d9da5; border-right-color: #fff; border-bottom-color: #fff; }
.bar { width: 20px; height: 181px; border: 1px solid #000; }
.legend ul { display: flex; flex-direction: column; justify-content: space-between; height: 193px; margin-top: -6px; }
.legend li { display: flex; align-items: center; gap: 5px; height: 13px; line-height: 13px; }
.legend li::before { content: ""; width: 6px; border-top: 1px solid #000; }
.page dl { display: grid; grid-template-columns: 26px 1fr; grid-auto-rows: 16px; margin-top: 4px; padding-left: 33px; background: #f6f6f7; border: solid #aaaaec; border-width: 0 1px 1px 0; line-height: 16px; }
.detail { align-self: flex-end; width: 27px; height: 23px; margin-top: 8px; padding: 0 3px; border: 1px solid; border-color: #fff #77777f #77777f #fff; }
.detail svg { width: 19px; height: 19px; shape-rendering: auto; }
.tab { position: relative; display: flex; align-items: center; gap: 2px; height: 22px; margin: -1px 0 0 12px; padding: 0 3px 0 4px; background: #e0dfe3; border: solid; border-width: 0 2px 2px 1px; border-color: #000 #000 #000 #fff; border-radius: 0 0 3px 3px; white-space: nowrap; }
.tab svg { width: 16px; height: 14px; }

.status { display: flex; align-items: center; flex: none; height: 20px; padding: 2px 0 0 1px; gap: 2px; }
.status span { flex: 1; padding-top: 2px; }
.pane { width: 76px; height: 17px; border: 1px solid; border-color: #9d9da5 #fff #fff #9d9da5; }
.pane.wide { width: 126px; }
.sizer { width: 14px; height: 14px; align-self: flex-end; margin-left: 3px; }
```

FILE: plot.js
```js
// Colour scale from the highest to the lowest stress ratio.
const scale = [
  [192, 0, 0], [255, 0, 0], [255, 128, 0], [200, 200, 0], [255, 255, 0], [0, 255, 0],
  [0, 224, 128], [0, 255, 255], [0, 144, 255], [0, 0, 255], [0, 0, 160], [0, 0, 160]
];
const STEPS = 5;

function colorAt(level) {
  const i = Math.max(0, Math.min(scale.length - 2, Math.floor(level)));
  const t = level - i;
  return "rgb(" + scale[i].map((c, k) => Math.round(c + (scale[i + 1][k] - c) * t)).join(",") + ")";
}

const bands = (scale.length - 1) * STEPS;
const parts = [];
for (let b = 0; b < bands; b++) {
  parts.push(`${colorAt(b / STEPS)} ${(b / bands) * 100}% ${((b + 1) / bands) * 100}%`);
}
document.getElementById("bar").style.background = `linear-gradient(${parts.join(",")})`;

// Stress falls linearly to the neutral zone and rises again below it.
const TOP = 126, PITCH = 36.6, BOTTOM = 759, MIRROR = 1068;
const gradient = document.getElementById("stress");
function addStop(offset, color) {
  const stop = document.createElementNS("http://www.w3.org/2000/svg", "stop");
  stop.setAttribute("offset", offset);
  stop.setAttribute("stop-color", color);
  gradient.append(stop);
}
const band = PITCH / 10;
for (let y = TOP; y < BOTTOM; y += band) {
  const folded = Math.min(y, MIRROR - y);
  const color = colorAt(Math.min(11, (folded - TOP) / PITCH));
  addStop((y - TOP) / (BOTTOM - TOP), color);
  addStop((y + band - TOP) / (BOTTOM - TOP), color);
}
```
